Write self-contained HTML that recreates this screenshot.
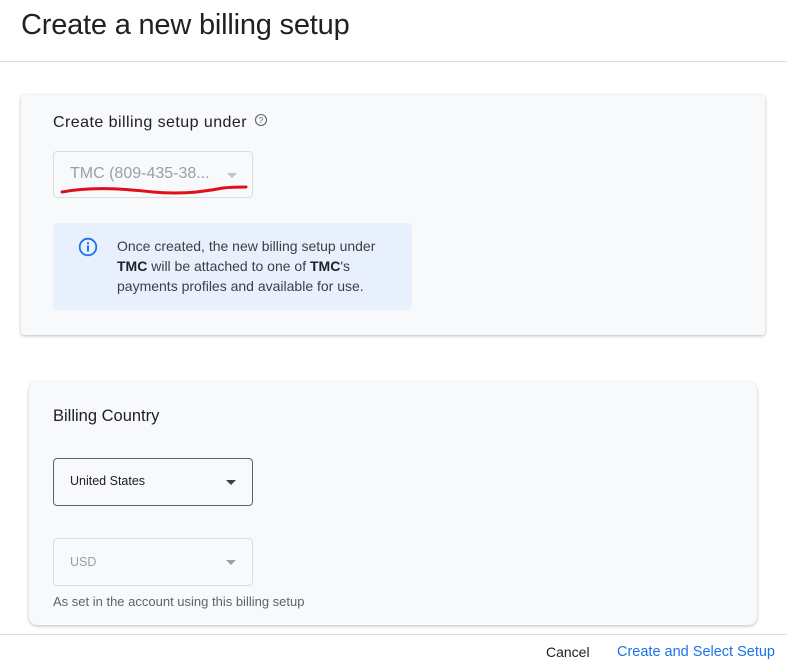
<!DOCTYPE html>
<html><head><meta charset="utf-8"><style>
*{box-sizing:border-box;margin:0;padding:0}
body{width:787px;height:672px;background:#fff;font-family:"Liberation Sans",sans-serif;position:relative;overflow:hidden;color:#202124}
.abs{position:absolute;white-space:nowrap}
.title{left:21px;top:9px;font-size:29px;color:#202124;letter-spacing:-0.2px}
.hr{left:0;width:787px;height:1px;background:#dadce0}
.card{background:#f8f9fa;box-shadow:0 1px 3px rgba(60,64,67,.35);border-radius:3px}
.sel{border:1px solid #dadce0;border-radius:4px;background:#f8f9fa}
.arrow{position:absolute;width:0;height:0;border-left:5px solid transparent;border-right:5px solid transparent;border-top:5px solid #5f6368}
</style></head><body>
<div class="abs title">Create a new billing setup</div>
<div class="abs hr" style="top:61px"></div>

<div class="abs card" style="left:21px;top:95px;width:744px;height:240px"></div>
<div class="abs" style="left:53px;top:114px;font-size:16px;letter-spacing:0.45px;color:#202124">Create billing setup under</div>
<svg class="abs" style="left:254px;top:113px" width="14" height="14" viewBox="0 0 14 14"><circle cx="7" cy="7" r="5.5" fill="none" stroke="#5f6368" stroke-width="1.1"/><text x="7" y="10" font-size="8" text-anchor="middle" fill="#5f6368" font-family="Liberation Sans">?</text></svg>
<div class="abs sel" style="left:53px;top:151px;width:200px;height:47px"></div>
<div class="abs" style="left:70px;top:165px;font-size:16px;color:#9aa0a6">TMC (809-435-38...</div>
<div class="arrow" style="left:227px;top:173px;border-top-color:#bdc1c6"></div>
<svg class="abs" style="left:58px;top:180px" width="192" height="18" viewBox="0 0 192 18"><path d="M4 12 C30 7,60 8,95 12 C125 15,150 11,165 8 C175 7,185 7,188 7" fill="none" stroke="#e0101a" stroke-width="3" stroke-linecap="round"/></svg>
<div class="abs" style="left:53px;top:223px;width:359px;height:87px;background:#e8f0fe;border-radius:5px"></div>
<svg class="abs" style="left:78px;top:237px" width="20" height="20" viewBox="0 0 20 20"><circle cx="10" cy="10" r="8.3" fill="none" stroke="#1a73e8" stroke-width="1.8"/><rect x="9" y="8.5" width="2" height="6" fill="#1a73e8"/><rect x="9" y="5.2" width="2" height="2" fill="#1a73e8"/></svg>
<div class="abs" style="left:117px;top:236px;font-size:14px;line-height:20px;color:#3c4043;width:295px">Once created, the new billing setup under<br><b style="color:#202124">TMC</b> will be attached to one of <b style="color:#202124">TMC</b>'s<br>payments profiles and available for use.</div>

<div class="abs card" style="left:29px;top:382px;width:728px;height:243px;border-radius:8px"></div>
<div class="abs" style="left:53px;top:407px;font-size:16.5px;color:#202124">Billing Country</div>
<div class="abs" style="left:53px;top:458px;width:200px;height:48px;border:1px solid #5f6368;border-radius:4px;background:#f8f9fa"></div>
<div class="abs" style="left:70px;top:474px;font-size:12.5px;color:#202124">United States</div>
<div class="arrow" style="left:226px;top:480px;border-top-color:#3c4043"></div>
<div class="abs sel" style="left:53px;top:538px;width:200px;height:48px"></div>
<div class="abs" style="left:70px;top:555px;font-size:12.5px;color:#9aa0a6">USD</div>
<div class="arrow" style="left:226px;top:560px;border-top-color:#9aa0a6"></div>
<div class="abs" style="left:53px;top:594px;font-size:13px;color:#5f6368">As set in the account using this billing setup</div>

<div class="abs hr" style="top:634px"></div>
<div class="abs" style="left:546px;top:644px;font-size:14px;color:#202124">Cancel</div>
<div class="abs" style="left:617px;top:644px;font-size:14.5px;color:#1a73e8">Create and Select Setup</div>
</body></html>
